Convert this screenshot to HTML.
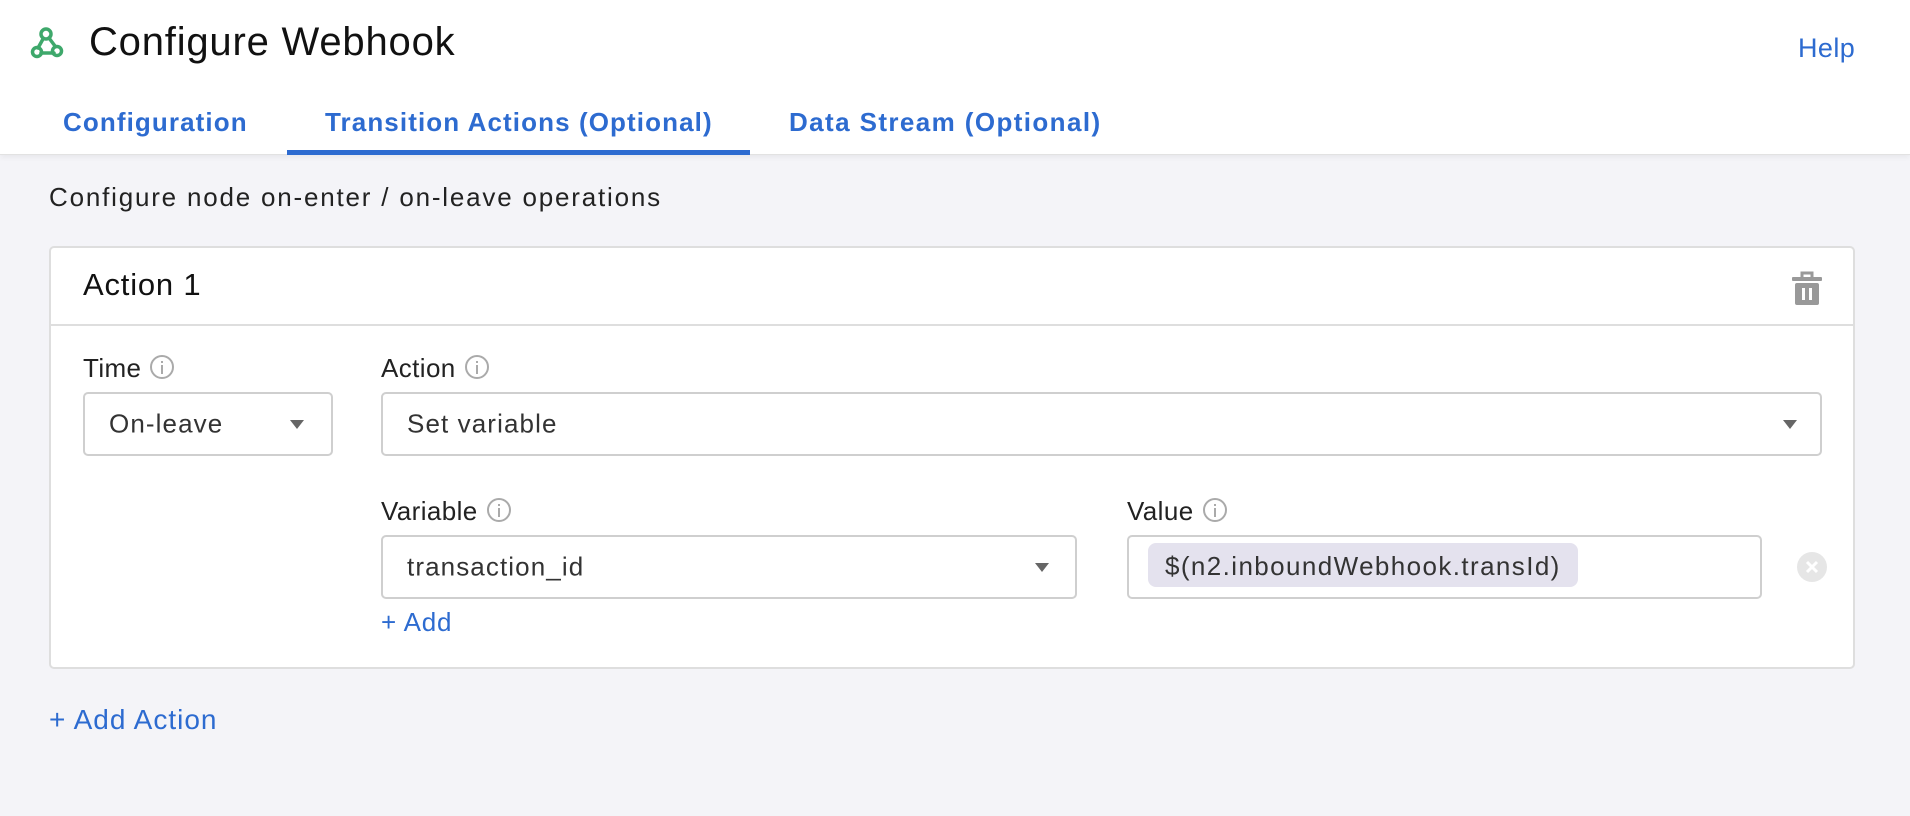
<!DOCTYPE html>
<html><head><meta charset="utf-8"><style>
*{box-sizing:border-box;margin:0;padding:0}
body{width:1910px;height:816px;overflow:hidden;background:#f4f4f8;font-family:"Liberation Sans",sans-serif;color:#222;position:relative}
.abs{position:absolute;white-space:nowrap}
.hdr{position:absolute;left:0;top:0;width:1910px;height:155px;background:#fff;border-bottom:1px solid #e2e2e2;box-shadow:0 2px 6px rgba(0,0,0,.06)}
.tab{position:absolute;top:107px;font-size:26px;font-weight:bold;color:#2d6bd0;letter-spacing:1.1px}
.blue{color:#2d6bd0}
.card{position:absolute;left:49px;top:246px;width:1806px;height:423px;background:#fff;border:2px solid #dedede;border-radius:5px}
.sel{position:absolute;background:#fff;border:2px solid #cfcfcf;border-radius:5px}
.sel span{position:absolute;left:24px;top:50%;transform:translateY(-50%);font-size:26px;letter-spacing:1.1px;color:#333}
.caret{position:absolute;width:0;height:0;border-left:7px solid transparent;border-right:7px solid transparent;border-top:9px solid #666;top:50%;margin-top:-4px}
.lbl{position:absolute;font-size:26px;letter-spacing:0.4px;color:#222}
.info{display:inline-block;width:24px;height:24px;border:2px solid #aaa;border-radius:50%;vertical-align:-2px;margin-left:9px;position:relative}
.info:before{content:"";position:absolute;left:9px;top:4px;width:2px;height:2px;background:#aaa}
.info:after{content:"";position:absolute;left:9px;top:8px;width:2px;height:9px;background:#aaa}
</style></head><body>
<div class="hdr"></div>
<svg class="abs" style="left:30px;top:26px" width="34" height="34" viewBox="0 0 34 34" fill="none" stroke="#3ea86b" stroke-width="3.5" stroke-linecap="round">
<circle cx="16" cy="8" r="5"/><path d="M13 13 L8 22"/><circle cx="7" cy="26" r="4.5"/><path d="M11 27 H24"/><circle cx="27" cy="25" r="4.5"/><path d="M19 12 L25 20"/>
</svg>
<div class="abs" style="left:89px;top:20px;font-size:40px;letter-spacing:0.8px;color:#111">Configure Webhook</div>
<div class="abs blue" style="left:1798px;top:33px;font-size:27px;letter-spacing:0.4px">Help</div>
<div class="tab" style="left:63px">Configuration</div>
<div class="tab" style="left:325px">Transition Actions (Optional)</div>
<div class="tab" style="left:789px;letter-spacing:1.4px">Data Stream (Optional)</div>
<div class="abs" style="left:287px;top:150px;width:463px;height:5px;background:#2d6bd0"></div>
<div class="abs" style="left:49px;top:182px;font-size:26px;letter-spacing:1.8px;color:#222">Configure node on-enter / on-leave operations</div>
<div class="card">
<div class="abs" style="left:32px;top:19px;font-size:31px;letter-spacing:0.8px;color:#111">Action 1</div>
<svg class="abs" style="left:1741px;top:22px" width="30" height="36" viewBox="0 0 30 36"><rect x="0" y="7" width="30" height="4" rx="1" fill="#999"/><path d="M10 8 V3 H20 V8" stroke="#999" stroke-width="3" fill="none"/><rect x="3" y="13" width="24" height="22" rx="2" fill="#999"/><rect x="10" y="18" width="3" height="12" fill="#fff"/><rect x="17" y="18" width="3" height="12" fill="#fff"/></svg>
<div class="abs" style="left:0;top:76px;width:1802px;height:2px;background:#dedede"></div>
<div class="lbl" style="left:32px;top:105px">Time<i class="info"></i></div>
<div class="lbl" style="left:330px;top:105px">Action<i class="info"></i></div>
<div class="sel" style="left:32px;top:144px;width:250px;height:64px"><span>On-leave</span><i class="caret" style="left:205px"></i></div>
<div class="sel" style="left:330px;top:144px;width:1441px;height:64px"><span>Set variable</span><i class="caret" style="left:1400px"></i></div>
<div class="lbl" style="left:330px;top:248px">Variable<i class="info"></i></div>
<div class="lbl" style="left:1076px;top:248px">Value<i class="info"></i></div>
<div class="sel" style="left:330px;top:287px;width:696px;height:64px"><span>transaction_id</span><i class="caret" style="left:652px"></i></div>
<div class="sel" style="left:1076px;top:287px;width:635px;height:64px"><div class="abs" style="left:19px;top:6px;height:44px;width:430px;background:#e4e2ee;border-radius:8px;font-size:26px;letter-spacing:1.4px;color:#333;padding:8px 0 0 17px">$(n2.inboundWebhook.transId)</div></div>
<svg class="abs" style="left:1746px;top:304px" width="30" height="30" viewBox="0 0 30 30"><circle cx="15" cy="15" r="15" fill="#e6e6e6"/><path d="M10 10 L20 20 M20 10 L10 20" stroke="#fff" stroke-width="3"/></svg>
<div class="abs blue" style="left:330px;top:359px;font-size:26px;letter-spacing:0.8px">+ Add</div>
</div>
<div class="abs blue" style="left:49px;top:704px;font-size:28px;letter-spacing:1px">+ Add Action</div>
</body></html>
